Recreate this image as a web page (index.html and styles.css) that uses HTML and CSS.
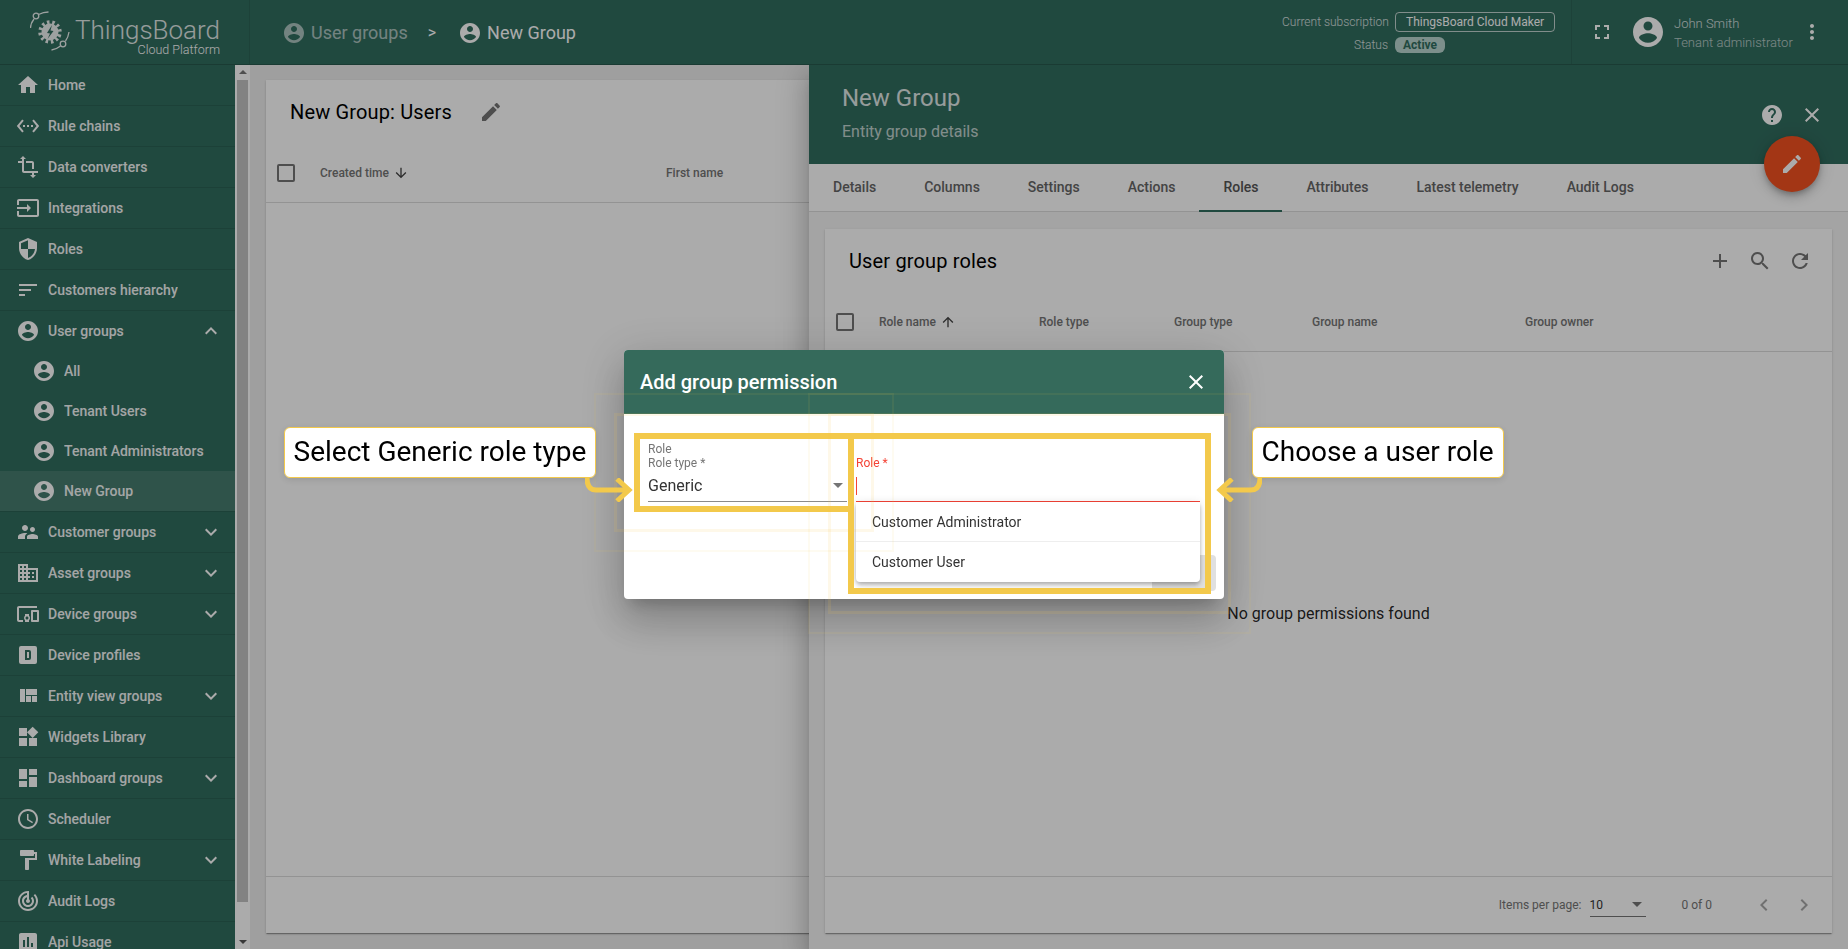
FILE: index.html
```html
<!DOCTYPE html>
<html>
<head>
    <meta charset="utf-8">
    <title>ThingsBoard | New Group</title>
    <link rel="stylesheet" href="styles.css">
</head>
<body>
    <svg class="defs" xmlns="http://www.w3.org/2000/svg">
        <symbol id="i-home" viewBox="0 0 24 24"><path d="M10 20v-6h4v6h5v-8h3L12 3 2 12h3v8z"/></symbol>
        <symbol id="i-user" viewBox="0 0 24 24"><path d="M12 2C6.48 2 2 6.48 2 12s4.48 10 10 10 10-4.48 10-10S17.52 2 12 2zm0 3c1.66 0 3 1.34 3 3s-1.34 3-3 3-3-1.34-3-3 1.34-3 3-3zm0 14.2c-2.5 0-4.71-1.28-6-3.22.03-1.99 4-3.08 6-3.08 1.99 0 5.97 1.09 6 3.08-1.29 1.94-3.5 3.22-6 3.22z"/></symbol>
        <symbol id="i-rule" viewBox="0 0 24 24"><path d="M7.77 6.76L6.23 5.48.82 12l5.41 6.52 1.54-1.28L3.42 12l4.35-5.24zM7 13h2v-2H7v2zm10-2h-2v2h2v-2zm-6 2h2v-2h-2v2zm6.77-7.52l-1.54 1.28L20.58 12l-4.35 5.24 1.54 1.28L23.18 12l-5.41-6.52z"/></symbol>
        <symbol id="i-transform" viewBox="0 0 24 24"><path d="M22 18v-2H8V4h2L7 1 4 4h2v2H2v2h4v8c0 1.1.9 2 2 2h8v2h-2l3 3 3-3h-2v-2h4zM10 8h6v6h2V8c0-1.1-.9-2-2-2h-6v2z"/></symbol>
        <symbol id="i-input" viewBox="0 0 24 24"><path d="M21 3.01H3c-1.1 0-2 .9-2 2V9h2V4.99h18v14.03H3V15H1v4.01c0 1.1.9 1.98 2 1.98h18c1.1 0 2-.88 2-1.98v-14c0-1.11-.9-2-2-2zM11 16l4-4-4-4v3H1v2h10v3z"/></symbol>
        <symbol id="i-security" viewBox="0 0 24 24"><path d="M12 1L3 5v6c0 5.55 3.84 10.74 9 12 5.16-1.26 9-6.45 9-12V5l-9-4zm0 10.99h7c-.53 4.12-3.28 7.79-7 8.94V12H5V6.3l7-3.11v8.8z"/></symbol>
        <symbol id="i-sort" viewBox="0 0 24 24"><path d="M3 18h6v-2H3v2zM3 6v2h18V6H3zm0 7h12v-2H3v2z"/></symbol>
        <symbol id="i-people" viewBox="0 0 24 24"><path d="M16.5 12c1.38 0 2.49-1.12 2.49-2.5S17.88 7 16.5 7C15.12 7 14 8.12 14 9.5s1.12 2.5 2.5 2.5zM9 11c1.66 0 2.99-1.34 2.99-3S10.66 5 9 5C7.34 5 6 6.34 6 8s1.34 3 3 3zm7.5 3c-1.83 0-5.5.92-5.5 2.75V19h11v-2.25c0-1.83-3.67-2.75-5.5-2.75zM9 13c-2.33 0-7 1.17-7 3.5V19h7v-2.25c0-.85.33-2.34 2.37-3.47C10.5 13.1 9.66 13 9 13z"/></symbol>
        <symbol id="i-domain" viewBox="0 0 24 24"><path d="M12 7V3H2v18h20V7H10zM6 19H4v-2h2v2zm0-4H4v-2h2v2zm0-4H4V9h2v2zm0-4H4V5h2v2zm4 12H8v-2h2v2zm0-4H8v-2h2v2zm0-4H8V9h2v2zm0-4H8V5h2v2zm10 12h-8v-2h2v-2h-2v-2h2v-2h-2V9h8v10zm-2-8h-2v2h2v-2zm0 4h-2v2h2v-2z"/></symbol>
        <symbol id="i-devices" viewBox="0 0 24 24"><path d="M3 6h18V4H3c-1.1 0-2 .9-2 2v12c0 1.1.9 2 2 2h4v-2H3V6zm10 6H9v1.78c-.61.55-1 1.33-1 2.22s.39 1.67 1 2.22V20h4v-1.78c.61-.55 1-1.34 1-2.22s-.39-1.67-1-2.22V12zm-2 5.5c-.83 0-1.5-.67-1.5-1.5s.67-1.5 1.5-1.5 1.5.67 1.5 1.5-.67 1.5-1.5 1.5zM22 8h-6c-.5 0-1 .5-1 1v10c0 .5.5 1 1 1h6c.5 0 1-.5 1-1V9c0-.5-.5-1-1-1zm-1 10h-4v-8h4v8z"/></symbol>
        <symbol id="i-dbox" viewBox="0 0 24 24"><path d="M19 3H5a2 2 0 0 0-2 2v14a2 2 0 0 0 2 2h14a2 2 0 0 0 2-2V5a2 2 0 0 0-2-2M9 7h4a2 2 0 0 1 2 2v6a2 2 0 0 1-2 2H9V7m2 2v6h2V9h-2z"/></symbol>
        <symbol id="i-quilt" viewBox="0 0 24 24"><path d="M10 18h5v-6h-5v6zm-6 0h5V5H4v13zm12 0h5v-6h-5v6zM10 5v6h11V5H10z"/></symbol>
        <symbol id="i-widgets" viewBox="0 0 24 24"><path d="M13 13v8h8v-8h-8zM3 21h8v-8H3v8zM3 3v8h8V3H3zm13.66-1.31L11 7.34 16.66 13l5.66-5.66-5.66-5.65z"/></symbol>
        <symbol id="i-dashboard" viewBox="0 0 24 24"><path d="M3 13h8V3H3v10zm0 8h8v-6H3v6zm10 0h8V11h-8v10zm0-18v6h8V3h-8z"/></symbol>
        <symbol id="i-schedule" viewBox="0 0 24 24"><path d="M11.99 2C6.47 2 2 6.48 2 12s4.47 10 9.99 10C17.52 22 22 17.52 22 12S17.52 2 11.99 2zM12 20c-4.42 0-8-3.58-8-8s3.58-8 8-8 8 3.58 8 8-3.58 8-8 8zm.5-13H11v6l5.25 3.15.75-1.23-4.5-2.67z"/></symbol>
        <symbol id="i-paint" viewBox="0 0 24 24"><path d="M18 4V3c0-.55-.45-1-1-1H5c-.55 0-1 .45-1 1v4c0 .55.45 1 1 1h12c.55 0 1-.45 1-1V6h1v4H9v11c0 .55.45 1 1 1h2c.55 0 1-.45 1-1v-9h8V4h-3z"/></symbol>
        <symbol id="i-track" viewBox="0 0 24 24"><path d="M19.07 4.93l-1.41 1.41C19.1 7.79 20 9.79 20 12c0 4.42-3.58 8-8 8s-8-3.58-8-8c0-4.08 3.05-7.44 7-7.93v2.02C8.16 6.57 6 9.03 6 12c0 3.31 2.69 6 6 6s6-2.69 6-6c0-1.66-.67-3.16-1.76-4.24l-1.41 1.41C15.55 9.9 16 10.9 16 12c0 2.21-1.79 4-4 4s-4-1.79-4-4c0-1.86 1.28-3.41 3-3.86v2.14c-.6.35-1 .98-1 1.72 0 1.1.9 2 2 2s2-.9 2-2c0-.74-.4-1.38-1-1.72V2h-1C6.48 2 2 6.48 2 12s4.48 10 10 10 10-4.48 10-10c0-2.76-1.12-5.26-2.93-7.07z"/></symbol>
        <symbol id="i-chart" viewBox="0 0 24 24"><path d="M19 3H5c-1.1 0-2 .9-2 2v14c0 1.1.9 2 2 2h14c1.1 0 2-.9 2-2V5c0-1.1-.9-2-2-2zM9 17H7v-7h2v7zm4 0h-2V7h2v10zm4 0h-2v-4h2v4z"/></symbol>
        <symbol id="i-more" viewBox="0 0 24 24"><path d="M16.59 8.59L12 13.17 7.41 8.59 6 10l6 6 6-6z"/></symbol>
        <symbol id="i-less" viewBox="0 0 24 24"><path d="M12 8l-6 6 1.41 1.41L12 10.83l4.59 4.58L18 14z"/></symbol>
        <symbol id="i-edit" viewBox="0 0 24 24"><path d="M3 17.25V21h3.75L17.81 9.94l-3.75-3.75L3 17.25zM20.71 7.04c.39-.39.39-1.02 0-1.41l-2.34-2.34c-.39-.39-1.02-.39-1.41 0l-1.83 1.83 3.75 3.75 1.83-1.83z"/></symbol>
        <symbol id="i-close" viewBox="0 0 24 24"><path d="M19 6.41L17.59 5 12 10.59 6.41 5 5 6.41 10.59 12 5 17.59 6.41 19 12 13.41 17.59 19 19 17.59 13.41 12z"/></symbol>
        <symbol id="i-help" viewBox="0 0 24 24"><path d="M12 2C6.48 2 2 6.48 2 12s4.48 10 10 10 10-4.48 10-10S17.52 2 12 2zm1 17h-2v-2h2v2zm2.07-7.75l-.9.92C13.45 12.9 13 13.5 13 15h-2v-.5c0-1.1.45-2.1 1.17-2.83l1.24-1.26c.37-.36.59-.86.59-1.41 0-1.1-.9-2-2-2s-2 .9-2 2H8c0-2.21 1.79-4 4-4s4 1.79 4 4c0 .88-.36 1.68-.93 2.25z"/></symbol>
        <symbol id="i-fullscreen" viewBox="0 0 24 24"><path d="M7 14H5v5h5v-2H7v-3zm-2-4h2V7h3V5H5v5zm12 7h-3v2h5v-5h-2v3zM14 5v2h3v3h2V5h-5z"/></symbol>
        <symbol id="i-vert" viewBox="0 0 24 24"><path d="M12 8c1.1 0 2-.9 2-2s-.9-2-2-2-2 .9-2 2 .9 2 2 2zm0 2c-1.1 0-2 .9-2 2s.9 2 2 2 2-.9 2-2-.9-2-2-2zm0 6c-1.1 0-2 .9-2 2s.9 2 2 2 2-.9 2-2-.9-2-2-2z"/></symbol>
        <symbol id="i-add" viewBox="0 0 24 24"><path d="M19 13h-6v6h-2v-6H5v-2h6V5h2v6h6v2z"/></symbol>
        <symbol id="i-search" viewBox="0 0 24 24"><path d="M15.5 14h-.79l-.28-.27C15.41 12.59 16 11.11 16 9.5 16 5.91 13.09 3 9.5 3S3 5.91 3 9.5 5.91 16 9.5 16c1.61 0 3.09-.59 4.23-1.57l.27.28v.79l5 4.99L20.49 19l-4.99-5zm-6 0C7.01 14 5 11.99 5 9.5S7.01 5 9.5 5 14 7.01 14 9.5 11.99 14 9.5 14z"/></symbol>
        <symbol id="i-refresh" viewBox="0 0 24 24"><path d="M17.65 6.35C16.2 4.9 14.21 4 12 4c-4.42 0-7.99 3.58-7.99 8s3.57 8 7.99 8c3.73 0 6.84-2.55 7.73-6h-2.08c-.82 2.33-3.04 4-5.65 4-3.31 0-6-2.69-6-6s2.69-6 6-6c1.66 0 3.14.69 4.22 1.78L13 11h7V4l-2.35 2.35z"/></symbol>
        <symbol id="i-up" viewBox="0 0 24 24"><path d="M4 12l1.41 1.41L11 7.83V20h2V7.83l5.58 5.59L20 12l-8-8-8 8z"/></symbol>
        <symbol id="i-down" viewBox="0 0 24 24"><path d="M20 12l-1.41-1.41L13 16.17V4h-2v12.17l-5.58-5.59L4 12l8 8 8-8z"/></symbol>
        <symbol id="i-prev" viewBox="0 0 24 24"><path d="M15.41 7.41L14 6l-6 6 6 6 1.41-1.41L10.83 12z"/></symbol>
        <symbol id="i-next" viewBox="0 0 24 24"><path d="M10 6L8.59 7.41 13.17 12l-4.58 4.59L10 18l6-6z"/></symbol>
    </svg>

    <header class="topbar">
        <div class="brand">
            <svg class="logo" viewBox="0 0 41 41">
                <g transform="rotate(40 20 21)">
                    <circle cx="20" cy="21" r="9.500" fill="none" stroke="#fff" stroke-width="4.500" stroke-dasharray="2.400 2.600"/>
                </g>
                <circle cx="20" cy="21" r="8.500" fill="#fff"/>
                <path d="M22 14l-5 8 3 .5-2.500 5.500 6-8-3-.5z" fill="#316d5f"/>
                <circle cx="6" cy="5" r="2.800" fill="none" stroke="#fff" stroke-width="1.300"/>
                <path d="M8.500 3.500c3-1.500 6-2.500 10-2.500M4 8c-2 2.500-3.500 5.500-3.500 9M35.500 30c2-2.500 3-5.500 3.500-9M30.500 35c-2.500 2-5 3.500-9 4" fill="none" stroke="#fff" stroke-width="1.300"/>
                <circle cx="33" cy="33" r="2.800" fill="none" stroke="#fff" stroke-width="1.300"/>
            </svg>
            <div class="brand-text">
                <div class="brand-name">ThingsBoard</div>
                <div class="brand-sub">Cloud Platform</div>
            </div>
        </div>
        <div class="crumbs">
            <svg class="icon crumb-dim"><use href="#i-user"/></svg>
            <span class="crumb-dim">User groups</span>
            <span class="crumb-sep">&gt;</span>
            <svg class="icon"><use href="#i-user"/></svg>
            <span>New Group</span>
        </div>
        <div class="subscription">
            <div class="sub-row">
                <span class="sub-label">Current subscription</span>
                <span class="sub-plan">ThingsBoard Cloud Maker</span>
            </div>
            <div class="sub-row">
                <span class="sub-label">Status</span>
                <span class="sub-active">Active</span>
            </div>
        </div>
        <div class="account">
            <svg class="icon fullscreen"><use href="#i-fullscreen"/></svg>
            <svg class="avatar"><use href="#i-user"/></svg>
            <div class="account-text">
                <div class="account-name">John Smith</div>
                <div class="account-role">Tenant administrator</div>
            </div>
            <svg class="icon kebab"><use href="#i-vert"/></svg>
        </div>
    </header>

    <div class="layout">
        <aside class="sidebar">
            <nav class="menu">
                <a class="menu-item"><svg class="icon"><use href="#i-home"/></svg><span>Home</span></a>
                <a class="menu-item"><svg class="icon"><use href="#i-rule"/></svg><span>Rule chains</span></a>
                <a class="menu-item"><svg class="icon"><use href="#i-transform"/></svg><span>Data converters</span></a>
                <a class="menu-item"><svg class="icon"><use href="#i-input"/></svg><span>Integrations</span></a>
                <a class="menu-item"><svg class="icon"><use href="#i-security"/></svg><span>Roles</span></a>
                <a class="menu-item"><svg class="icon"><use href="#i-sort"/></svg><span>Customers hierarchy</span></a>
                <a class="menu-item open"><svg class="icon"><use href="#i-user"/></svg><span>User groups</span><svg class="icon chevron"><use href="#i-less"/></svg></a>
                <div class="submenu">
                    <a class="sub-item"><svg class="icon"><use href="#i-user"/></svg><span>All</span></a>
                    <a class="sub-item"><svg class="icon"><use href="#i-user"/></svg><span>Tenant Users</span></a>
                    <a class="sub-item"><svg class="icon"><use href="#i-user"/></svg><span>Tenant Administrators</span></a>
                    <a class="sub-item active"><svg class="icon"><use href="#i-user"/></svg><span>New Group</span></a>
                </div>
                <a class="menu-item"><svg class="icon"><use href="#i-people"/></svg><span>Customer groups</span><svg class="icon chevron"><use href="#i-more"/></svg></a>
                <a class="menu-item"><svg class="icon"><use href="#i-domain"/></svg><span>Asset groups</span><svg class="icon chevron"><use href="#i-more"/></svg></a>
                <a class="menu-item"><svg class="icon"><use href="#i-devices"/></svg><span>Device groups</span><svg class="icon chevron"><use href="#i-more"/></svg></a>
                <a class="menu-item"><svg class="icon"><use href="#i-dbox"/></svg><span>Device profiles</span></a>
                <a class="menu-item"><svg class="icon"><use href="#i-quilt"/></svg><span>Entity view groups</span><svg class="icon chevron"><use href="#i-more"/></svg></a>
                <a class="menu-item"><svg class="icon"><use href="#i-widgets"/></svg><span>Widgets Library</span></a>
                <a class="menu-item"><svg class="icon"><use href="#i-dashboard"/></svg><span>Dashboard groups</span><svg class="icon chevron"><use href="#i-more"/></svg></a>
                <a class="menu-item"><svg class="icon"><use href="#i-schedule"/></svg><span>Scheduler</span></a>
                <a class="menu-item"><svg class="icon"><use href="#i-paint"/></svg><span>White Labeling</span><svg class="icon chevron"><use href="#i-more"/></svg></a>
                <a class="menu-item"><svg class="icon"><use href="#i-track"/></svg><span>Audit Logs</span></a>
                <a class="menu-item"><svg class="icon"><use href="#i-chart"/></svg><span>Api Usage</span></a>
            </nav>
            <div class="scrollbar">
                <div class="scroll-up"></div>
                <div class="scroll-thumb"></div>
                <div class="scroll-down"></div>
            </div>
        </aside>

        <main class="content">
            <section class="card users-card">
                <div class="card-title users-title">
                    <span>New Group: Users</span>
                    <svg class="icon grey title-edit"><use href="#i-edit"/></svg>
                </div>
                <div class="table-head users-head">
                    <span class="checkbox"></span>
                    <span class="col col-created">Created time <svg class="sort-arrow"><use href="#i-down"/></svg></span>
                    <span class="col">First name</span>
                </div>
                <div class="users-body"></div>
                <div class="users-foot"></div>
            </section>

            <section class="drawer">
                <div class="drawer-head">
                    <div class="drawer-title">New Group</div>
                    <div class="drawer-sub">Entity group details</div>
                    <svg class="icon drawer-help"><use href="#i-help"/></svg>
                    <svg class="icon drawer-close"><use href="#i-close"/></svg>
                </div>
                <button class="fab"><svg class="icon"><use href="#i-edit"/></svg></button>
                <div class="tabs">
                    <span class="tab">Details</span>
                    <span class="tab">Columns</span>
                    <span class="tab">Settings</span>
                    <span class="tab">Actions</span>
                    <span class="tab active">Roles</span>
                    <span class="tab">Attributes</span>
                    <span class="tab">Latest telemetry</span>
                    <span class="tab">Audit Logs</span>
                </div>
                <div class="drawer-body">
                    <section class="card roles-card">
                        <div class="card-title roles-title">
                            <span>User group roles</span>
                            <div class="card-tools">
                                <svg class="icon grey"><use href="#i-add"/></svg>
                                <svg class="icon grey"><use href="#i-search"/></svg>
                                <svg class="icon grey"><use href="#i-refresh"/></svg>
                            </div>
                        </div>
                        <div class="table-head roles-head">
                            <span class="checkbox"></span>
                            <span class="col col-name">Role name <svg class="sort-arrow"><use href="#i-up"/></svg></span>
                            <span class="col col-type">Role type</span>
                            <span class="col col-group">Group type</span>
                            <span class="col col-gname">Group name</span>
                            <span class="col">Group owner</span>
                        </div>
                        <div class="empty">No group permissions found</div>
                        <div class="pager">
                            <span>Items per page:</span>
                            <span class="pager-select"><span>10</span><i class="caret"></i></span>
                            <span class="pager-range">0 of 0</span>
                            <svg class="icon pager-btn"><use href="#i-prev"/></svg>
                            <svg class="icon pager-btn"><use href="#i-next"/></svg>
                        </div>
                    </section>
                </div>
            </section>
        </main>
    </div>

    <div class="backdrop">
        <div class="dialog">
            <div class="dialog-head">
                <span>Add group permission</span>
                <svg class="icon"><use href="#i-close"/></svg>
            </div>
            <div class="dialog-body">
                <div class="field field-type">
                    <div class="field-hint">Role</div>
                    <div class="field-label">Role type *</div>
                    <div class="field-value"><span>Generic</span><i class="caret"></i></div>
                </div>
                <div class="field field-role">
                    <div class="field-label">Role *</div>
                    <div class="field-value"><i class="text-caret"></i></div>
                </div>
                <span class="dialog-btn"></span>
                <div class="role-list">
                    <div class="role-option">Customer Administrator</div>
                    <div class="role-option">Customer User</div>
                </div>
            </div>

            <div class="mark mark-type"></div>
            <div class="mark mark-role"></div>
        </div>

        <div class="note note-left">Select Generic role type</div>
        <svg class="arrow arrow-left" viewBox="0 0 50 24">
            <path d="M2 0c0 8 3 12 9 12h32M32 1l12 11-12 11" fill="none" stroke="#f3c94b" stroke-width="5"/>
        </svg>
        <div class="note note-right">Choose a user role</div>
        <svg class="arrow arrow-right" viewBox="0 0 50 24">
            <path d="M48 0c0 8-3 12-9 12H9M20 1L8 12l12 11" fill="none" stroke="#f3c94b" stroke-width="5"/>
        </svg>
    </div>
</body>
</html>
```

FILE: styles.css
```css
* {
    box-sizing: border-box;
}
html, body {
    height: 100%;
    margin: 0;
    overflow: hidden;
}
body {
    display: flex;
    flex-direction: column;
    font-family: Roboto, sans-serif;
    font-size: 14px;
    background-color: #eeeeee;
    color: #000;
}
.defs {
    display: none;
}
.icon {
    width: 24px;
    height: 24px;
    flex: none;
    fill: currentColor;
}
.grey {
    color: #757575;
}

/* top bar */
.topbar {
    height: 65px;
    flex: none;
    display: flex;
    align-items: center;
    background-color: #316d5f;
    border-bottom: 1px solid #27584d;
    color: #fff;
    position: relative;
    z-index: 2;
}
.brand {
    width: 250px;
    height: 64px;
    flex: none;
    display: flex;
    padding: 11px 0 0 30px;
    border-right: 1px solid #2c6356;
}
.logo {
    width: 41px;
    height: 41px;
    flex: none;
    opacity: .9;
}
.brand-text {
    margin-left: 3px;
    width: 146px;
    text-align: right;
}
.brand-name {
    font-size: 26px;
    font-weight: 300;
    line-height: 30px;
    margin-top: 4px;
    opacity: .85;
}
.brand-sub {
    font-size: 12.5px;
    font-weight: 300;
    line-height: 13px;
    margin-top: -2px;
}
.crumbs {
    display: flex;
    align-items: center;
    margin-left: 32px;
    font-size: 18px;
    line-height: 24px;
    flex: 1;
    padding-top: 1px;
}
.crumbs span {
    margin-left: 5px;
}
.crumb-dim {
    opacity: .6;
}
.crumbs .crumb-sep {
    margin: 0 22px 0 20px;
    font-size: 16px;
}
.subscription {
    width: 289px;
    flex: none;
    display: flex;
    flex-direction: column;
    gap: 5px;
    font-size: 12px;
    font-weight: 300;
    margin-top: 1px;
}
.sub-row {
    display: flex;
    align-items: center;
    gap: 7px;
}
.sub-label {
    width: 106px;
    text-align: right;
    white-space: nowrap;
    opacity: .8;
}
.sub-plan {
    height: 20px;
    line-height: 18px;
    padding: 0 10px;
    border: 1px solid rgba(255, 255, 255, .7);
    border-radius: 4px;
    font-weight: 400;
    white-space: nowrap;
}
.sub-active {
    height: 16px;
    line-height: 16px;
    padding: 0 8px;
    border-radius: 6px;
    background-color: #b9d6cf;
    color: #316d5f;
    font-weight: 700;
}
.account {
    width: 277px;
    height: 64px;
    flex: none;
    display: flex;
    align-items: center;
    border-left: 1px solid #2c6356;
    font-size: 13px;
    font-weight: 300;
}
.fullscreen {
    margin-left: 18px;
}
.avatar {
    width: 36px;
    height: 36px;
    flex: none;
    fill: currentColor;
    margin-left: 16px;
}
.account-text {
    margin-left: 8px;
    line-height: 19px;
    width: 126px;
    padding-top: 1px;
    white-space: nowrap;
}
.account-name {
    opacity: .8;
}
.account-role {
    opacity: .65;
}

/* side menu */
.layout {
    flex: 1;
    display: flex;
    min-height: 0;
    position: relative;
}
.sidebar {
    width: 250px;
    flex: none;
    display: flex;
    overflow: hidden;
}
.menu {
    width: 235px;
    flex: none;
    background-color: #316d5f;
    color: #fff;
    font-weight: 500;
}
.menu-item {
    height: 41px;
    display: flex;
    align-items: center;
    padding-left: 16px;
    border-bottom: 1px solid #2a6154;
}
.menu-item span,
.sub-item span {
    margin-left: 8px;
    flex: 1;
    opacity: .95;
}
.menu-item.open {
    border-bottom: none;
    height: 40px;
}
.chevron {
    margin-right: 12px;
}
.submenu {
    border-bottom: 1px solid #2a6154;
}
.sub-item {
    height: 40px;
    display: flex;
    align-items: center;
    padding-left: 32px;
}
.sub-item.active {
    background-color: #467c6f;
}
.scrollbar {
    width: 15px;
    flex: none;
    display: flex;
    flex-direction: column;
    align-items: center;
    background-color: #fff;
}
.scroll-up, .scroll-down {
    height: 15px;
    flex: none;
    width: 0;
    border-left: 4px solid transparent;
    border-right: 4px solid transparent;
}
.scroll-up {
    height: 0;
    margin: 5px 0 6px;
    border-bottom: 4px solid #777;
}
.scroll-down {
    height: 0;
    margin: auto 0 5px;
    border-top: 4px solid #555;
}
.scroll-thumb {
    width: 11px;
    height: 822px;
    background-color: #c2c2c2;
}

/* main content */
.content {
    flex: 1;
    min-width: 0;
    position: relative;
    padding: 15px 16px 16px;
    display: flex;
}
.card {
    background-color: #fff;
    box-shadow: 0 2px 1px -1px rgba(0,0,0,.2), 0 1px 1px 0 rgba(0,0,0,.14), 0 1px 3px 0 rgba(0,0,0,.12);
    display: flex;
    flex-direction: column;
}
.users-card {
    flex: 1;
}
.card-title {
    font-size: 20px;
    line-height: 24px;
    letter-spacing: .15px;
    display: flex;
    align-items: center;
}
.users-title {
    height: 64px;
    padding-left: 24px;
}
.title-edit {
    margin-left: 27px;
}
.table-head {
    display: flex;
    align-items: center;
    border-bottom: 1px solid #dcdcdc;
    font-size: 12px;
    font-weight: 500;
    color: #757575;
}
.users-head {
    height: 59px;
    padding-left: 11px;
}
.checkbox {
    width: 18px;
    height: 18px;
    flex: none;
    border: 2px solid #757575;
    border-radius: 2px;
}
.col {
    display: flex;
    align-items: center;
    gap: 4px;
}
.col-created {
    margin-left: 25px;
    width: 346px;
}
.sort-arrow {
    width: 16px;
    height: 16px;
    fill: #444;
}
.users-body {
    flex: 1;
}
.users-foot {
    height: 57px;
    border-top: 1px solid #dcdcdc;
}

/* details drawer */
.drawer {
    position: absolute;
    top: 0;
    right: 0;
    bottom: 0;
    width: 1039px;
    background-color: #f5f5f5;
    box-shadow: 0 8px 10px -5px rgba(0,0,0,.2), 0 16px 24px 2px rgba(0,0,0,.14), 0 6px 30px 5px rgba(0,0,0,.12);
    display: flex;
    flex-direction: column;
}
.drawer-head {
    height: 99px;
    flex: none;
    background-color: #316d5f;
    color: #fff;
    padding: 17px 0 0 33px;
    position: relative;
}
.drawer-title {
    font-size: 24px;
    line-height: 32px;
    opacity: .85;
}
.drawer-sub {
    font-size: 16px;
    line-height: 20px;
    margin-top: 8px;
    opacity: .7;
}
.drawer-help, .drawer-close {
    position: absolute;
    top: 38px;
}
.drawer-help {
    right: 64px;
}
.drawer-close {
    right: 24px;
}
.fab {
    position: absolute;
    top: 71px;
    right: 28px;
    width: 56px;
    height: 56px;
    padding: 0;
    border: none;
    border-radius: 50%;
    background-color: #f35120;
    color: #fff;
    display: flex;
    align-items: center;
    justify-content: center;
    box-shadow: 0 3px 5px -1px rgba(0,0,0,.2), 0 6px 10px 0 rgba(0,0,0,.14), 0 1px 18px 0 rgba(0,0,0,.12);
    z-index: 1;
}
.tabs {
    height: 48px;
    flex: none;
    display: flex;
    background-color: #fff;
    border-bottom: 1px solid #dcdcdc;
}
.tab {
    padding: 0 24px;
    line-height: 47px;
    font-weight: 500;
    color: #666;
    white-space: nowrap;
}
.tab.active {
    color: #555;
    border-bottom: 2px solid #316d5f;
    height: 48px;
}
.drawer-body {
    flex: 1;
    display: flex;
    padding: 17px 16px 16px;
    min-height: 0;
}
.roles-card {
    flex: 1;
    position: relative;
}
.roles-title {
    height: 64px;
    padding: 0 20px 0 24px;
    justify-content: space-between;
}
.card-tools {
    display: flex;
    gap: 16px;
}
.roles-head {
    height: 59px;
    padding-left: 11px;
}
.col-name {
    margin-left: 25px;
    width: 160px;
}
.col-type {
    width: 135px;
}
.col-group {
    width: 138px;
}
.col-gname {
    width: 213px;
}
.empty {
    flex: 1;
    display: flex;
    align-items: center;
    justify-content: center;
    font-size: 16px;
    color: rgba(0,0,0,.87);
    padding-bottom: 2px;
}
.pager {
    height: 57px;
    flex: none;
    display: flex;
    align-items: center;
    justify-content: flex-end;
    border-top: 1px solid #dcdcdc;
    font-size: 12px;
    color: #757575;
    padding-right: 16px;
}
.pager-select {
    width: 56px;
    height: 24px;
    margin-left: 8px;
    color: #333;
    display: flex;
    align-items: center;
    justify-content: space-between;
    border-bottom: 1px solid #757575;
    padding: 0 4px 0 0;
}
.caret {
    width: 0;
    height: 0;
    border-left: 5px solid transparent;
    border-right: 5px solid transparent;
    border-top: 5px solid #757575;
}
.pager-range {
    margin: 0 40px 0 36px;
}
.pager-btn {
    color: #a8a8a8;
    margin-left: 16px;
}
.pager-range + .pager-btn {
    margin-left: 0;
}

/* dialog on top of the dimmed page */
.backdrop {
    position: fixed;
    inset: 0;
    background-color: rgba(0, 0, 0, .33);
    display: flex;
    align-items: center;
    justify-content: center;
    z-index: 5;
}
.dialog {
    width: 600px;
    height: 249px;
    position: relative;
    background-color: #fff;
    border-radius: 4px;
    box-shadow: 0 11px 15px -7px rgba(0,0,0,.2), 0 24px 38px 3px rgba(0,0,0,.14), 0 9px 46px 8px rgba(0,0,0,.12);
}
.dialog-head {
    height: 64px;
    display: flex;
    align-items: center;
    justify-content: space-between;
    padding: 0 16px;
    background-color: #356a5b;
    color: #fff;
    font-size: 20px;
    font-weight: 500;
    border-radius: 4px 4px 0 0;
}
.dialog-body {
    position: relative;
    height: 185px;
}
.field {
    position: absolute;
    top: 28px;
}
.field-type {
    left: 24px;
    width: 199px;
}
.field-role {
    left: 232px;
    width: 344px;
    padding-top: 14px;
}
.field-hint, .field-label {
    font-size: 12px;
    line-height: 15px;
    color: #757575;
}
.field-hint {
    line-height: 14px;
}
.field-role .field-label {
    color: #f44336;
}
.field-value {
    height: 29px;
    margin-top: 2px;
    display: flex;
    align-items: center;
    justify-content: space-between;
    font-size: 16px;
    color: #333;
    border-bottom: 1px solid #8a8a8a;
    padding: 0 4px 3px 0;
}
.field-role .field-value {
    border-bottom: 1px solid #f44336;
}
.text-caret {
    width: 1px;
    height: 18px;
    background-color: #f44336;
}
.dialog-btn {
    position: absolute;
    left: 528px;
    top: 141px;
    width: 64px;
    height: 36px;
    border-radius: 4px;
    background-color: #e0e0e0;
}
.role-list {
    position: absolute;
    left: 232px;
    top: 88px;
    width: 344px;
    background-color: #fff;
    border-radius: 0 0 4px 4px;
    box-shadow: 0 2px 4px -1px rgba(0,0,0,.2), 0 4px 5px 0 rgba(0,0,0,.14), 0 1px 10px 0 rgba(0,0,0,.12);
}
.role-option {
    height: 40px;
    line-height: 40px;
    padding-left: 16px;
    font-size: 14px;
    color: #333;
    border-bottom: 1px solid #eee;
}
.role-option:last-child {
    border-bottom: none;
}

/* tutorial highlights */
.mark {
    position: absolute;
    border: 6px solid #f3c94b;
    top: 83px;
    pointer-events: none;
}
.mark::before, .mark::after {
    content: "";
    position: absolute;
}
.mark::before {
    inset: -26px;
    border: 3px solid rgba(243, 201, 75, .12);
}
.mark::after {
    inset: -46px;
    border: 2px solid rgba(243, 201, 75, .08);
}
.mark-type {
    left: 10px;
    width: 220px;
    height: 79px;
}
.mark-role {
    left: 224px;
    width: 363px;
    height: 161px;
}
.note {
    position: absolute;
    top: 427px;
    height: 51px;
    line-height: 48px;
    padding: 0 8.500px;
    background-color: #fff;
    border: 1.500px solid #f3c94b;
    border-radius: 6px;
    font-size: 28px;
    white-space: nowrap;
    box-shadow: 0 2px 6px rgba(0,0,0,.1);
}
.note-left {
    left: 284px;
    width: 312px;
}
.note-right {
    left: 1252px;
    width: 252px;
}
.arrow {
    position: absolute;
    top: 478px;
    width: 50px;
    height: 24px;
}
.arrow-left {
    left: 585px;
}
.arrow-right {
    left: 1212px;
}
```
